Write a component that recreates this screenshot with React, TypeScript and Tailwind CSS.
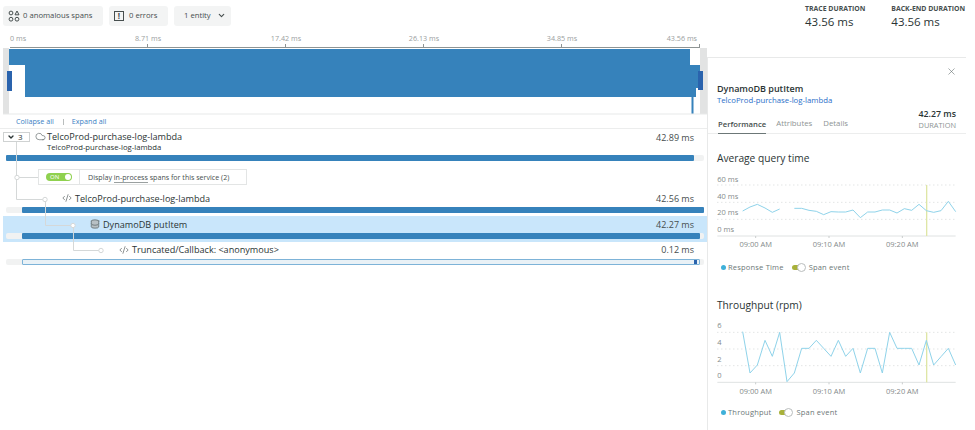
import { ChevronDown, Cloud, Code2, Database, X } from "lucide-react";

const responseLeft = "113,213 135,201 157,193 180,204 202,217 224,207";
const responseRight =
  "268,205 290,205 312,211 334,214 356,224 378,215 400,216 422,216 444,210 466,233 488,216 510,216 532,210 554,210 576,219 598,206 620,211 642,193 664,212 686,217 708,212 730,184 752,215";
const throughputLine =
  "113,140 135,264 157,240 180,166 202,214 224,142 246,290 268,264 290,190 312,190 334,166 356,190 378,214 400,166 422,214 444,190 466,264 488,190 510,190 532,264 554,142 576,190 598,190 620,190 642,240 664,166 686,240 708,215 730,190 752,240";

const rulerLabels = ["0 ms", "8.71 ms", "17.42 ms", "26.13 ms", "34.85 ms", "43.56 ms"];

const shift = (points: string, dy: number) =>
  points
    .split(" ")
    .map((p) => {
      const [x, y] = p.split(",");
      return `${x},${+y - dy}`;
    })
    .join(" ");

const TopButton = ({ children }: { children: React.ReactNode }) => (
  <div className="flex h-[20px] items-center rounded-[3px] bg-[#f3f4f4] text-[7.7px] whitespace-nowrap text-[#464e4e]">
    {children}
  </div>
);

const Bar = ({
  left,
  right,
  outlined,
}: {
  left: number;
  right: number;
  outlined?: boolean;
}) => (
  <div className="mr-[3px] ml-[6px] flex h-[6px] rounded-[2px] bg-[#f1f2f2]">
    <div style={{ width: left - 6 }} />
    {outlined ? (
      <div
        className="flex h-[6px] items-center justify-end rounded-[1px] border border-[#7db3d8] bg-[#e9f1f6] pr-[2px]"
        style={{ width: right - left }}
      >
        <div className="h-[4px] w-[3px] bg-[#2a63ad]" />
      </div>
    ) : (
      <div className="h-[6px] rounded-[1px] bg-[#3682bb]" style={{ width: right - left }} />
    )}
  </div>
);

const SpanRow = ({
  icon,
  indent,
  title,
  duration,
  active,
  children,
}: {
  icon: React.ReactNode;
  indent: number;
  title: string;
  duration: string;
  active?: boolean;
  children: React.ReactNode;
}) => (
  <div className={`h-[25.5px] ${active ? "ml-[3px] bg-[#c9e6fb]" : "ml-[3px]"}`}>
    <div className="-ml-[3px] flex h-[17px] items-center pr-[13px] text-[9.1px] whitespace-nowrap text-[#2a3434]">
      <div className="flex items-center gap-[3px]" style={{ paddingLeft: indent }}>
        {icon}
        <span>{title}</span>
      </div>
      <span className="ml-auto text-[9px] text-[#464e4e]">{duration}</span>
    </div>
    <div className="-ml-[3px]">{children}</div>
  </div>
);

const Legend = ({ label }: { label: string }) => (
  <div className="flex items-center text-[7.5px] tracking-[0.2px] whitespace-nowrap text-[#6c7777]">
    <span className="ml-[13px] h-[5px] w-[5px] rounded-full bg-[#3fb0d9]" />
    <span className="ml-[2px]">{label}</span>
    <div className="relative ml-[8px] h-[9px] w-[14px]">
      <div className="mt-[2px] h-[5px] w-[8px] rounded-l-full bg-[#a8b13a]" />
      <div className="absolute top-0 right-0 h-[9px] w-[9px] rounded-full border border-[#b9bdbd] bg-white" />
    </div>
    <span className="ml-[3px]">Span event</span>
  </div>
);

const ChartAxis = ({
  labels,
  gridY,
  labelY,
  timeY,
}: {
  labels: string[];
  gridY: number[];
  labelY: number[];
  timeY: number;
}) => (
  <g fontFamily="'Open Sans', sans-serif" fontSize="22.5" fill="#858b8b">
    {gridY.slice(0, 3).map((y) => (
      <line key={y} x1="37" x2="752" y1={y} y2={y} stroke="#d5d8d8" strokeWidth="3" strokeDasharray="3 9" />
    ))}
    <line x1="37" x2="752" y1={gridY[3]} y2={gridY[3]} stroke="#dfe2e2" strokeWidth="3" />
    {labels.map((l, i) => (
      <text key={l} x="37" y={labelY[i]}>
        {l}
      </text>
    ))}
    {["09:00 AM", "09:10 AM", "09:20 AM"].map((t, i) => (
      <g key={t}>
        <line x1={152 + i * 220} x2={152 + i * 220} y1={gridY[3]} y2={gridY[3] + 6} stroke="#c9cccc" strokeWidth="3" />
        <text x={152 + i * 220} y={timeY} textAnchor="middle">
          {t}
        </text>
      </g>
    ))}
  </g>
);

export default function App() {
  return (
    <div className="flex h-[430px] w-[975px] overflow-hidden bg-white font-['Open_Sans',sans-serif]">
      {/* trace column */}
      <div className="w-[707px] shrink-0">
        <div className="flex gap-[6px] pt-[6px] pl-[3px]">
          <TopButton>
            <div className="flex w-[100px] items-center">
              <svg className="ml-[5px]" width="12" height="12" viewBox="0 0 12 12" fill="none" stroke="#464e4e" strokeWidth="1">
                <circle cx="3" cy="3" r="1.9" />
                <path d="M9 1 L11 4.8 H7 Z" />
                <circle cx="3" cy="9.2" r="1.9" />
                <circle cx="9" cy="9.2" r="1.9" />
              </svg>
              <span className="ml-[3px]">0 anomalous spans</span>
            </div>
          </TopButton>
          <TopButton>
            <div className="flex w-[59px] items-center">
              <div className="ml-[5px] flex h-[10px] w-[10px] items-center justify-center border border-[#464e4e] text-[8px] leading-none font-bold">
                !
              </div>
              <span className="ml-[5px]">0 errors</span>
            </div>
          </TopButton>
          <TopButton>
            <div className="flex w-[57px] items-center">
              <span className="ml-[10px]">1 entity</span>
              <ChevronDown className="ml-[6px]" size={9} strokeWidth={3} />
            </div>
          </TopButton>
        </div>

        <div className="mt-[7px] ml-[10px] flex w-[690px] justify-between text-[7.2px] leading-[10px] whitespace-nowrap text-[#9aa0a0]">
          {rulerLabels.map((l, i) => (
            <div
              key={l}
              className={`flex w-0 ${i === 0 ? "justify-start" : i === 5 ? "justify-end" : "justify-center"}`}
            >
              <span className={i === 5 ? "pr-[3px]" : ""}>{l}</span>
            </div>
          ))}
        </div>
        <div className="mt-[1px] ml-[10px] grid h-[4px] w-[690px] grid-cols-5 border-b border-[#8e9494]">
          {[0, 1, 2, 3, 4].map((i) => (
            <div key={i} className="border-r border-[#8e9494]" />
          ))}
        </div>

        {/* minimap */}
        <svg className="block" width="707" height="67" viewBox="0 48 707 67">
          <rect x="3" y="48" width="6" height="66" fill="#e2e3e3" />
          <rect x="700" y="48" width="7" height="66" fill="#e2e3e3" />
          <path d="M9 49 H690 V65 H700 V88 H696 V97 H25 V65 H9 Z" fill="#3682bb" />
          <rect x="691.5" y="97" width="2" height="17" fill="#3682bb" />
          <rect x="7" y="71" width="5" height="20" fill="#2a63ad" />
          <rect x="698" y="71" width="5" height="19" fill="#2a63ad" />
          <rect x="3" y="113.5" width="704" height="1" fill="#e8e9e9" />
        </svg>

        <div className="flex h-[14px] items-center border-b border-[#eceded] text-[7.2px] text-[#3d7fc4]">
          <span className="ml-[16px]">Collapse all</span>
          <span className="ml-[9px] h-[6px] w-px bg-[#b9bdbd]" />
          <span className="ml-[8px]">Expand all</span>
        </div>

        {/* span tree */}
        <div className="relative">
          <div className="flex h-[26px] pt-[3px] pr-[13px]">
            <div className="ml-[3px] flex h-[10px] w-[27px] items-center border border-[#cfd2d2] text-[8px] text-[#2a3434]">
              <ChevronDown className="ml-[3px]" size={8} strokeWidth={4} />
              <span className="ml-[3px] leading-none">3</span>
            </div>
            <Cloud className="mt-[-1px] ml-[5px] text-[#5c6666]" size={11} strokeWidth={1.4} />
            <div className="mt-[-2px] ml-[1px] whitespace-nowrap text-[#2a3434]">
              <div className="text-[9.1px] leading-[13px]">TelcoProd-purchase-log-lambda</div>
              <div className="text-[7.7px] leading-[9px]">TelcoProd-purchase-log-lambda</div>
            </div>
            <span className="mt-[-1px] ml-auto text-[9px] leading-[13px] text-[#464e4e]">42.89 ms</span>
          </div>
          <Bar left={6} right={694} />

          <div className="mt-[8px] ml-[38px] flex h-[16px] w-[209px] items-center border border-[#e3e5e5] text-[7.1px] whitespace-nowrap text-[#464e4e]">
            <div className="flex h-full w-[41px] items-center border-r border-[#e3e5e5]">
              <div className="ml-[7px] flex h-[8px] w-[26px] items-center justify-between rounded-full bg-[#8fd14f] pr-[1px] pl-[4px] text-[6px] text-white">
                ON
                <span className="h-[6px] w-[6px] rounded-full bg-white" />
              </div>
            </div>
            <span className="ml-[8px]">
              Display <span className="border-b border-[#9aa0a0]">in-process</span> spans for this service (2)
            </span>
          </div>

          <div className="mt-[5px]">
            <SpanRow icon={<Code2 size={10} strokeWidth={1.5} className="text-[#464e4e]" />} indent={62} title="TelcoProd-purchase-log-lambda" duration="42.56 ms">
              <Bar left={22} right={704} />
            </SpanRow>
          </div>
          <div className="mt-[0.5px]">
            <SpanRow active icon={<Database size={10} strokeWidth={1.6} fill="#b8c0c4" className="text-[#4e5a5e]" />} indent={90} title="DynamoDB putItem" duration="42.27 ms">
              <Bar left={22} right={700} />
            </SpanRow>
          </div>
          <SpanRow icon={<Code2 size={10} strokeWidth={1.5} className="text-[#464e4e]" />} indent={119} title="Truncated/Callback: <anonymous>" duration="0.12 ms">
            <Bar left={22} right={700} outlined />
          </SpanRow>

          {/* tree connectors */}
          <svg className="absolute top-0 left-0" width="120" height="135" viewBox="0 129 120 135" fill="none" stroke="#d5d8d8">
            <path d="M16.5 142 V199.5 H45.5 V225.5 H73.5 V250.5 H101" />
            <path d="M16.5 177.5 H38" />
            {[
              [17, 177.5],
              [45, 199.5],
              [73, 225.5],
              [101, 250.5],
            ].map(([cx, cy]) => (
              <circle key={cx} cx={cx} cy={cy} r="2.2" fill="#fff" />
            ))}
          </svg>
        </div>
      </div>

      {/* details column */}
      <div className="flex-1">
        <div className="flex h-[57px] gap-[26px] pt-[4px] pl-[98px] text-[#2a3434]">
          <div>
            <div className="text-[6.9px] leading-[10px] font-bold whitespace-nowrap text-[#464e4e]">TRACE DURATION</div>
            <div className="text-[11.5px] leading-[16px]">43.56 ms</div>
          </div>
          <div>
            <div className="text-[6.9px] leading-[10px] font-bold whitespace-nowrap text-[#464e4e]">BACK-END DURATION</div>
            <div className="text-[11.5px] leading-[16px]">43.56 ms</div>
          </div>
        </div>

        <div className="h-[373px] w-[259px] border-t border-l border-[#e8e9e9]">
          <div className="flex justify-end pt-[8px] pr-[9px]">
            <X size={11} strokeWidth={1.2} className="text-[#5c6666]" />
          </div>
          <div className="mt-[5px] ml-[9px] text-[9px] leading-[13px] font-semibold text-[#2a3434]">DynamoDB putItem</div>
          <div className="ml-[9px] text-[7.75px] leading-[11px] text-[#2a6fc9]">TelcoProd-purchase-log-lambda</div>
          <div className="flex h-[28px] items-end border-b border-[#eceded] pl-[10px] text-[#8e9494]">
            <div className="-mb-px flex h-[17px] items-center border-b border-[#6c7777] text-[7.7px] font-semibold text-[#464e4e]">Performance</div>
            <div className="mb-[0.5px] ml-[10px] flex h-[17px] items-center text-[7.8px]">Attributes</div>
            <div className="mb-[0.5px] ml-[11px] flex h-[17px] items-center text-[7.8px]">Details</div>
            <div className="mb-[2px] ml-auto pr-[10px] text-right">
              <div className="text-[8.8px] leading-[12px] font-semibold text-[#2a3434]">42.27 ms</div>
              <div className="text-[7.4px] leading-[11px]">DURATION</div>
            </div>
          </div>

          <div className="mt-[16px] ml-[9px] text-[10.2px] leading-[16px] text-[#2a3434]">Average query time</div>
          <svg className="-ml-[3px] block" width="270" height="96" viewBox="0 0 810 288" fill="none">
            <ChartAxis labels={["60 ms", "40 ms", "20 ms", "0 ms"]} gridY={[57, 109, 160, 210]} labelY={[47, 98, 148, 197]} timeY={244} />
            <rect x="663" y="57" width="4" height="153" fill="#dfe6a6" />
            <polyline points={shift(responseLeft, 78)} stroke="#8fd3ea" strokeWidth="3" />
            <polyline points={shift(responseRight, 78)} stroke="#8fd3ea" strokeWidth="3" />
          </svg>
          <Legend label="Response Time" />

          <div className="mt-[24px] ml-[9px] text-[10.2px] leading-[16px] text-[#2a3434]">Throughput (rpm)</div>
          <svg className="-ml-[3px] block" width="270" height="94" viewBox="0 0 810 282" fill="none">
            <ChartAxis labels={["6", "4", "2", "0"]} gridY={[58, 108, 158, 208]} labelY={[46, 96, 146, 196]} timeY={243} />
            <rect x="663" y="58" width="4" height="150" fill="#dfe6a6" />
            <polyline points={shift(throughputLine, 84)} stroke="#8fd3ea" strokeWidth="3" />
          </svg>
          <Legend label="Throughput" />
        </div>
      </div>
    </div>
  );
}
